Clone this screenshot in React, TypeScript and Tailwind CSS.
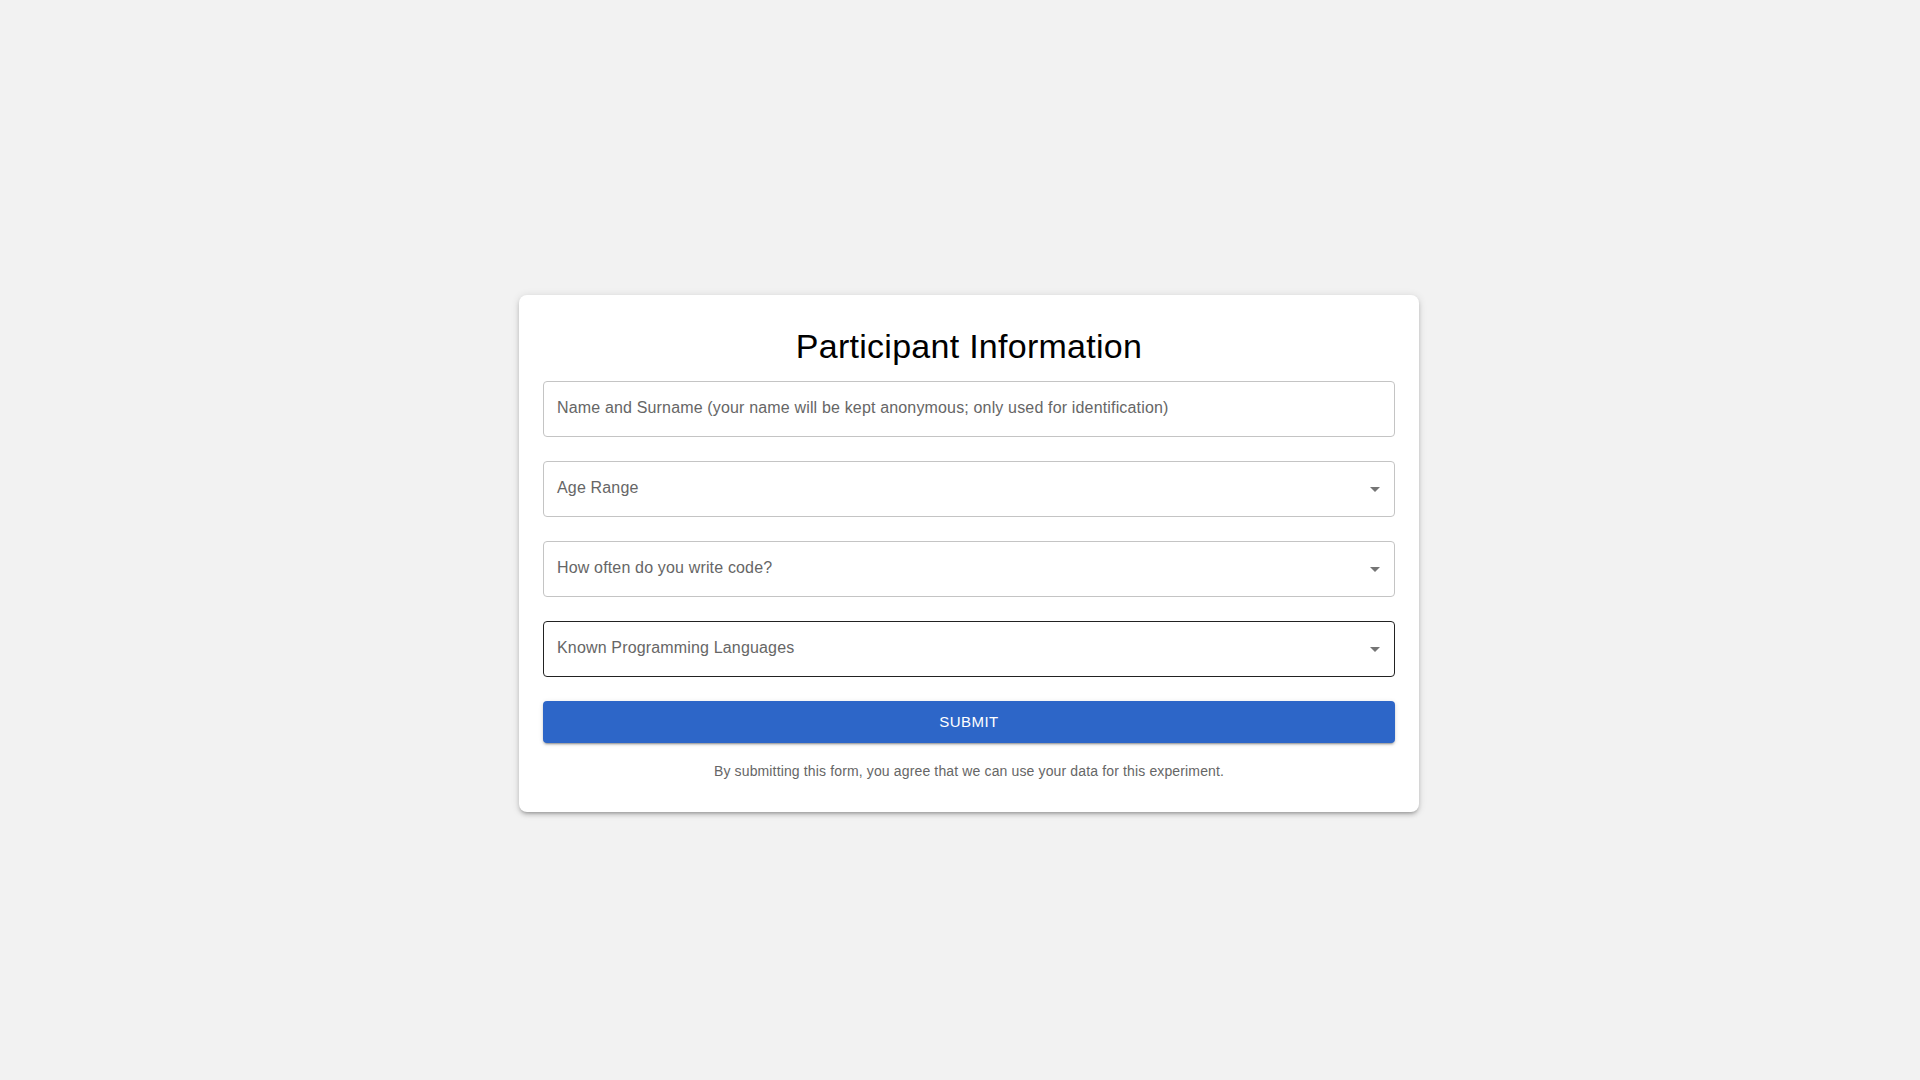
const fields = [
  { label: "Name and Surname (your name will be kept anonymous; only used for identification)", select: false, active: false },
  { label: "Age Range", select: true, active: false },
  { label: "How often do you write code?", select: true, active: false },
  { label: "Known Programming Languages", select: true, active: true },
];

const ArrowDown = () => (
  <svg viewBox="0 0 24 24" className="h-6 w-6 fill-[#757575]">
    <path d="M7 10l5 5 5-5z" />
  </svg>
);

export default function App() {
  return (
    <div className="min-h-screen w-full bg-[#f2f2f2] flex items-center justify-center pl-[18px] pt-[27px] font-['Liberation_Sans',Arial,sans-serif]">
      <div className="w-[900px] bg-white rounded-lg px-6 pt-[30px] pb-[31px] shadow-[0px_3px_3px_-2px_rgba(0,0,0,0.2),0px_3px_4px_0px_rgba(0,0,0,0.14),0px_1px_8px_0px_rgba(0,0,0,0.12)]">
        <h1 className="text-center text-[34px] leading-[42px] tracking-[0.008em] text-black">Participant Information</h1>

        <div className="mt-[14px] flex flex-col gap-6">
          {fields.map((f) => (
            <div
              key={f.label}
              className={
                f.active
                  ? "h-[56px] rounded border border-[#222222] flex items-center pl-[13px] pr-[7px]"
                  : "h-[56px] rounded border border-[#c4c4c4] flex items-center pl-[13px] pr-[7px]"
              }
            >
              <span className="flex-1 pb-[3px] text-base leading-[23px] tracking-[0.01em] text-[#666666]">{f.label}</span>
              {f.select && <ArrowDown />}
            </div>
          ))}
        </div>

        <button className="mt-[24px] h-[42px] w-full rounded bg-[#2d66c8] text-white text-[15px] font-medium tracking-[0.03em] uppercase shadow-[0px_3px_1px_-2px_rgba(0,0,0,0.2),0px_2px_2px_0px_rgba(0,0,0,0.14),0px_1px_5px_0px_rgba(0,0,0,0.12)]">
          Submit
        </button>

        <p className="mt-[18px] text-center text-sm leading-5 tracking-[0.01em] text-[#666666]">
          By submitting this form, you agree that we can use your data for this experiment.
        </p>
      </div>
    </div>
  );
}
